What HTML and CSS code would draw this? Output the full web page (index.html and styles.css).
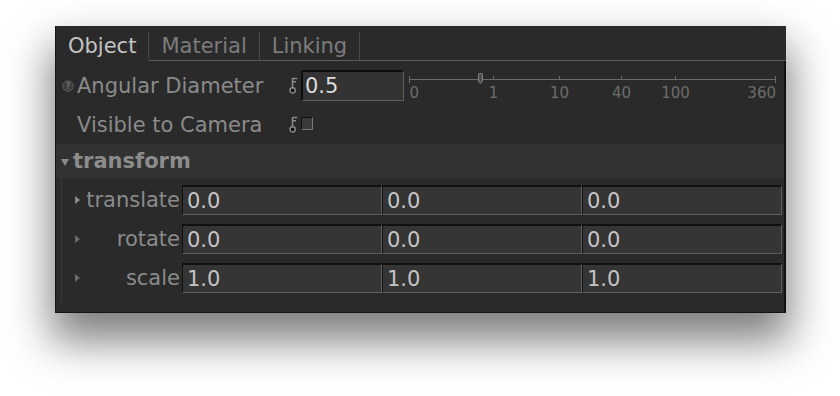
FILE: index.html
```html
<!DOCTYPE html>
<html>
<head>
<meta charset="utf-8">
<link rel="stylesheet" href="styles.css">
</head>
<body>
<div class="window">
  <div class="tabs">
    <div class="tab active">Object</div>
    <div class="tab">Material</div>
    <div class="tab">Linking</div>
    <div class="tab-fill"></div>
  </div>
  <div class="content">
    <div class="param first">
      <svg class="help" width="12" height="12" viewBox="0 0 12 12">
        <circle cx="6" cy="6" r="5.2" fill="#3c3c3c" stroke="#5a5a5a" stroke-width="1"/>
        <text x="6" y="8.8" text-anchor="middle" font-family="DejaVu Sans" font-size="8" font-weight="bold" fill="#6e6e6e">?</text>
      </svg>
      <span class="label">Angular Diameter</span>
      <svg class="key" width="10" height="17" viewBox="0 0 10 17">
        <path d="M3.5 1.2 V11 M3.5 1.6 H8.2 M3.5 4.8 H7" stroke="#8c8c8c" stroke-width="1.5" fill="none"/>
        <circle cx="3.6" cy="13.4" r="2.6" fill="#111" stroke="#8c8c8c" stroke-width="1.4"/>
      </svg>
      <div class="input">0.5</div>
      <svg class="slider" width="367" height="31" viewBox="0 0 367 31">
        <g stroke="#6a6a6a" stroke-width="1">
          <line x1="0.5" y1="9.5" x2="366.5" y2="9.5"/>
          <line x1="0.5" y1="6" x2="0.5" y2="13"/>
          <line x1="366.5" y1="6" x2="366.5" y2="13"/>
          <line x1="84.5" y1="6" x2="84.5" y2="9.5"/>
          <line x1="150.5" y1="6" x2="150.5" y2="9.5"/>
          <line x1="212.5" y1="6" x2="212.5" y2="9.5"/>
          <line x1="266.5" y1="6" x2="266.5" y2="9.5"/>
        </g>
        <path d="M69.5 4.5 Q69.5 3.5 70.5 3.5 H72.5 Q73.5 3.5 73.5 4.5 V11 L71.5 13.5 L69.5 11 Z" fill="#4a4a4a" stroke="#858585" stroke-width="1"/>
        <g font-family="DejaVu Sans" font-size="15" fill="#6c6c6c">
          <text x="0.5" y="27.5">0</text>
          <text x="84.5" y="27.5" text-anchor="middle">1</text>
          <text x="150.5" y="27.5" text-anchor="middle">10</text>
          <text x="212.5" y="27.5" text-anchor="middle">40</text>
          <text x="266.5" y="27.5" text-anchor="middle">100</text>
          <text x="367" y="27.5" text-anchor="end">360</text>
        </g>
      </svg>
    </div>
    <div class="param second">
      <span class="help-space"></span>
      <span class="label">Visible to Camera</span>
      <svg class="key" width="10" height="17" viewBox="0 0 10 17">
        <path d="M3.5 1.2 V11 M3.5 1.6 H8.2 M3.5 4.8 H7" stroke="#8c8c8c" stroke-width="1.5" fill="none"/>
        <circle cx="3.6" cy="13.4" r="2.6" fill="#111" stroke="#8c8c8c" stroke-width="1.4"/>
      </svg>
      <span class="checkbox"></span>
    </div>
    <div class="group-header"><span class="tri-down"></span>transform</div>
    <div class="group">
      <div class="vrow">
        <span class="tri-right bright"></span>
        <span class="vlabel">translate</span>
        <div class="field">0.0</div><div class="field">0.0</div><div class="field">0.0</div>
      </div>
      <div class="vrow">
        <span class="tri-right"></span>
        <span class="vlabel">rotate</span>
        <div class="field">0.0</div><div class="field">0.0</div><div class="field">0.0</div>
      </div>
      <div class="vrow">
        <span class="tri-right"></span>
        <span class="vlabel">scale</span>
        <div class="field">1.0</div><div class="field">1.0</div><div class="field">1.0</div>
      </div>
    </div>
  </div>
</div>
</body>
</html>
```

FILE: styles.css
```css
* { box-sizing: border-box; }
html, body { margin: 0; padding: 0; background: #ffffff; }
body {
  font-family: "DejaVu Sans", Verdana, sans-serif;
  font-size: 21px;
  width: 840px;
  height: 396px;
  overflow: hidden;
  padding: 26px 0 0 55px;
}
.window {
  width: 731px;
  height: 287px;
  background: #2a2a2a;
  border-left: 1px solid #151515;
  border-bottom: 1px solid #141414;
  box-shadow: 0 24px 40px 4px rgba(0,0,0,0.5);
  display: flex;
  flex-direction: column;
}
.tabs {
  display: flex;
  height: 35px;
  flex: none;
}
.tab {
  margin-top: 6px;
  height: 29px;
  line-height: 28px;
  padding: 0 12px;
  border-right: 1px solid #474747;
  border-bottom: 1px solid #5c5c5c;
  color: #7c7c7c;
}
.tab.active {
  color: #c4c4c4;
  border-bottom-color: transparent;
}
.tab-fill {
  flex: 1;
  border-bottom: 1px solid #5c5c5c;
}
.content {
  flex: 1;
  border-right: 2px solid #121212;
  display: flex;
  flex-direction: column;
}
.param {
  display: flex;
  align-items: center;
  height: 31px;
  padding-left: 6px;
  color: #8a8a8a;
}
.param.first { margin-top: 9px; }
.param.second { margin-top: 8px; }
.help { width: 12px; height: 12px; margin-right: 3px; flex: none; }
.help-space { width: 12px; margin-right: 3px; flex: none; }
.label { width: 212px; flex: none; white-space: nowrap; }
.key { flex: none; margin-right: 2px; }
.input {
  width: 103px;
  height: 31px;
  background: #333333;
  border-top: 2px solid #0f0f0f;
  border-left: 2px solid #0f0f0f;
  border-right: 1px solid #5e5e5e;
  border-bottom: 1px solid #5e5e5e;
  color: #dcdcdc;
  padding-left: 2px;
  line-height: 28px;
  margin-right: 5px;
  flex: none;
}
.slider { flex: none; }
.checkbox {
  width: 12px;
  height: 13px;
  background: #3a3a3a;
  border-top: 1px solid #0f0f0f;
  border-left: 1px solid #0f0f0f;
  border-right: 1px solid #777;
  border-bottom: 1px solid #777;
  flex: none;
  margin-top: -2px;
}
.group-header {
  margin-top: 4px;
  height: 34px;
  background: #323232;
  display: flex;
  align-items: center;
  padding-left: 5px;
  font-weight: bold;
  color: #8c8c8c;
}
.tri-down {
  width: 0; height: 0;
  border-left: 4px solid transparent;
  border-right: 4px solid transparent;
  border-top: 7px solid #8a8a8a;
  margin-right: 4px;
  margin-top: 3px;
}
.group {
  margin-left: 5px;
  border-left: 1px solid #383838;
  padding: 7px 0 10px 13px;
  display: flex;
  flex-direction: column;
  gap: 9px;
}
.vrow {
  display: flex;
  align-items: center;
  height: 30px;
}
.tri-right {
  width: 0; height: 0;
  border-top: 4px solid transparent;
  border-bottom: 4px solid transparent;
  border-left: 5px solid #6a6a6a;
  flex: none;
}
.tri-right.bright { border-left-color: #8a8a8a; }
.vlabel {
  width: 100px;
  text-align: right;
  color: #8a8a8a;
  margin-right: 2px;
  flex: none;
}
.field {
  width: 200px;
  height: 30px;
  background: #353535;
  border-top: 2px solid #101010;
  border-left: 1px solid #101010;
  border-right: 1px solid #5e5e5e;
  border-bottom: 1px solid #5e5e5e;
  color: #c4c4c4;
  padding-left: 4px;
  line-height: 28px;
  flex: none;
}
```
